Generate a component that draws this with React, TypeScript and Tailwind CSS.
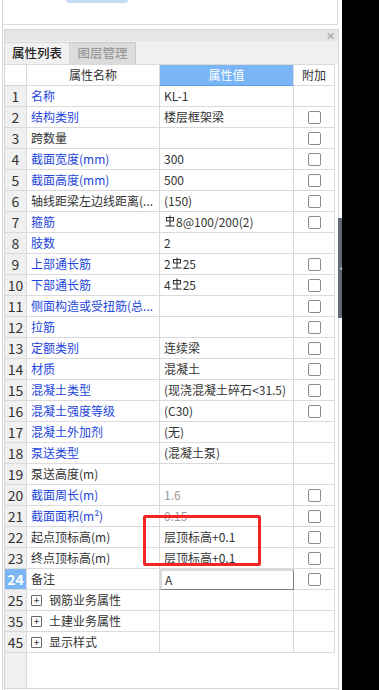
import { Fragment } from "react"

type Row = {
  no: string
  name: string
  blue?: boolean
  value?: React.ReactNode
  gray?: boolean
  cb?: boolean
  group?: boolean
  selected?: boolean
}

const Rebar = () => (
  <svg width="10" height="12" viewBox="0 0 10 12" className="inline-block mx-[1px] -mt-[3px] align-middle">
    <path d="M5 0.5V11 M1.5 2.5h7v3.5h-7z M0.5 11h9" fill="none" stroke="#333" strokeWidth="1.1" />
  </svg>
)

const rows: Row[] = [
  { no: "1", name: "名称", blue: true, value: "KL-1" },
  { no: "2", name: "结构类别", blue: true, value: "楼层框架梁", cb: true },
  { no: "3", name: "跨数量", cb: true },
  { no: "4", name: "截面宽度(mm)", blue: true, value: "300", cb: true },
  { no: "5", name: "截面高度(mm)", blue: true, value: "500", cb: true },
  { no: "6", name: "轴线距梁左边线距离(...", value: "(150)", cb: true },
  { no: "7", name: "箍筋", blue: true, value: <><Rebar />8@100/200(2)</>, cb: true },
  { no: "8", name: "肢数", blue: true, value: "2" },
  { no: "9", name: "上部通长筋", blue: true, value: <>2<Rebar />25</>, cb: true },
  { no: "10", name: "下部通长筋", blue: true, value: <>4<Rebar />25</>, cb: true },
  { no: "11", name: "侧面构造或受扭筋(总...", blue: true, cb: true },
  { no: "12", name: "拉筋", blue: true, cb: true },
  { no: "13", name: "定额类别", blue: true, value: "连续梁", cb: true },
  { no: "14", name: "材质", blue: true, value: "混凝土", cb: true },
  { no: "15", name: "混凝土类型", blue: true, value: "(现浇混凝土碎石<31.5)", cb: true },
  { no: "16", name: "混凝土强度等级", blue: true, value: "(C30)", cb: true },
  { no: "17", name: "混凝土外加剂", blue: true, value: "(无)" },
  { no: "18", name: "泵送类型", blue: true, value: "(混凝土泵)" },
  { no: "19", name: "泵送高度(m)" },
  { no: "20", name: "截面周长(m)", blue: true, value: "1.6", gray: true, cb: true },
  { no: "21", name: "截面面积(m²)", blue: true, value: "0.15", gray: true, cb: true },
  { no: "22", name: "起点顶标高(m)", value: "层顶标高+0.1", cb: true },
  { no: "23", name: "终点顶标高(m)", value: "层顶标高+0.1", cb: true },
  { no: "24", name: "备注", value: "A", cb: true, selected: true },
  { no: "25", name: "钢筋业务属性", group: true },
  { no: "35", name: "土建业务属性", group: true },
  { no: "45", name: "显示样式", group: true },
]

const cell = "h-[21px] border-r border-b border-[#dadada] flex items-center"

export default function App() {
  return (
    <div
      className="w-[379px] h-[690px] flex bg-black overflow-hidden text-[12px] text-[#333]"
      style={{ fontFamily: '"Noto Sans CJK SC", "Noto Sans", sans-serif' }}
    >
      <div className="w-[342px] h-full bg-white relative flex flex-col pl-[2px]">
        <div className="h-full border-l border-[#d6d6d6] flex flex-col">
          {/* top box */}
          <div className="h-[25px] shrink-0 mr-[4px] border-r border-b border-[#dcdcdc] relative">
            <div className="absolute left-[63px] top-[-3px] w-[62px] h-[6px] rounded-[3px] bg-[#c6dbf3]" />
          </div>
          <div className="h-[4px] shrink-0" />

          {/* panel */}
          <div className="flex-1 ml-[1px] mr-[3px] border-l border-r border-t border-[#d4d4d4] flex flex-col bg-white">
            <div className="h-[11px] shrink-0 bg-[#e6e6e6] flex items-center justify-end pr-[3px]">
              <span className="text-[#a0a0a0] text-[11px] leading-none">✕</span>
            </div>
            <div className="h-[23px] shrink-0 bg-[#f0f0f0] flex items-end">
              <div className="w-[65px] h-[22px] bg-[#f0f0f0] border-r border-t border-[#d6d6d6] flex items-center justify-center text-[#222] font-medium text-[12.5px]">
                属性列表
              </div>
              <div className="w-[66px] h-[22px] bg-[#dcdcdc] border-r border-t border-[#cbcbcb] flex items-center justify-center text-[#9a9a9a] font-medium text-[12.5px]">
                图层管理
              </div>
            </div>

            {/* grid */}
            <div className="grid grid-cols-[22px_133px_134px_41px] w-[330px] border-t border-[#dadada]">
              <div className={`${cell} bg-white`} />
              <div className={`${cell} justify-center`}>属性名称</div>
              <div className={`${cell} justify-center bg-[#7ab6f5] text-white border-b-[#5d9de6]`}>属性值</div>
              <div className={`${cell} justify-center`}>附加</div>
              {rows.map((r) => (
                <Fragment key={r.no}>
                  <div
                    className={`${cell} justify-center text-[14px] ${
                      r.selected ? "bg-[#7ab6f5] text-white font-bold" : "bg-[#f0f0f0]"
                    }`}
                  >
                    {r.no}
                  </div>
                  <div className={`${cell} pl-[4px] whitespace-nowrap overflow-hidden ${r.blue ? "text-[#2446dc]" : "text-[#333]"}`}>
                    {r.group && (
                      <span className="w-[11px] h-[11px] border border-[#666] rounded-[1px] mr-[7px] flex items-center justify-center text-[10px] leading-none text-[#333]">
                        +
                      </span>
                    )}
                    {r.name}
                  </div>
                  {r.selected ? (
                    <div className={`${cell} pl-[3px] border-2 border-[#808080] border-r-[#808080] border-b-[#808080]`}>{r.value}</div>
                  ) : (
                    <div className={`${cell} pl-[4px] whitespace-nowrap ${r.gray ? "text-[#999]" : "text-[#333]"}`}>{r.value}</div>
                  )}
                  <div className={`${cell} justify-center`}>
                    {r.cb && <span className="w-[13px] h-[13px] border border-[#8a8a8a] rounded-[2px] bg-white" />}
                  </div>
                </Fragment>
              ))}
            </div>
            <div className="flex-1 flex border-b border-[#d4d4d4] mb-[1px]">
              <div className="w-[22px] bg-[#f0f0f0] border-r border-[#dadada]" />
            </div>
          </div>
        </div>

        {/* red annotation box */}
        <div className="absolute left-[143px] top-[515px] w-[118px] h-[51px] border-[3px] border-[#f42424] rounded-[2px]" />

        {/* splitter thumb */}
        <div className="absolute left-[338px] top-[218px] w-[4px] h-[100px] bg-[#646a73] flex items-center justify-center">
          <span className="text-[#b5bac0] text-[6px] leading-none">◂</span>
        </div>
      </div>
      <div className="flex-1 bg-black" />
    </div>
  )
}
